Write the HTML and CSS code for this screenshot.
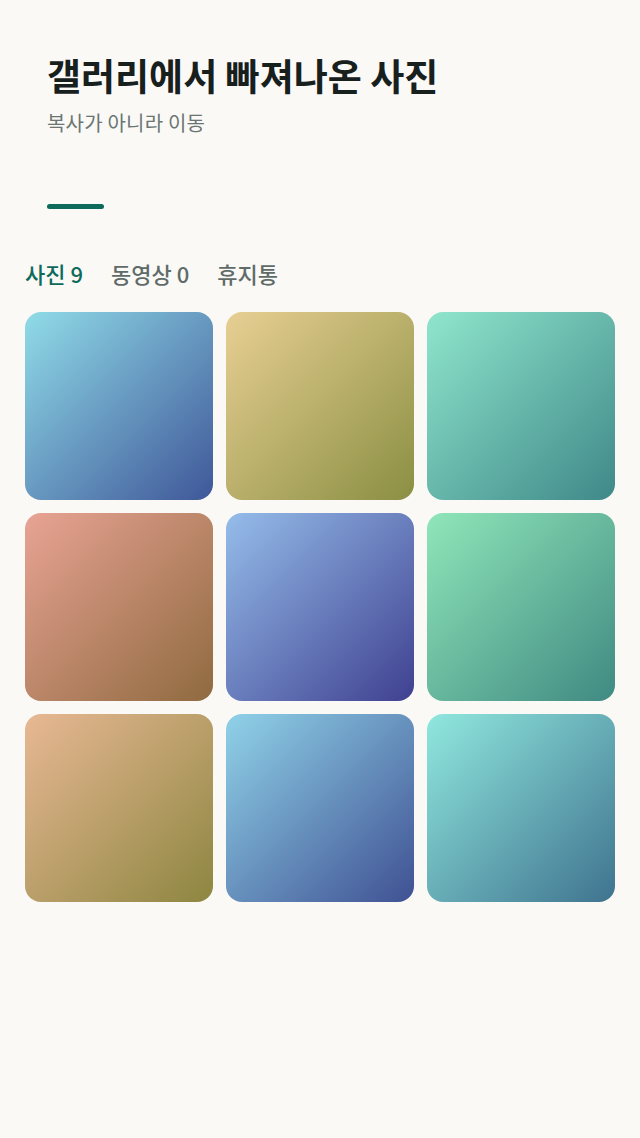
FILE: index.html
```html
<!DOCTYPE html>
<html>
    <head>
        <title>갤러리</title>
        <link rel="stylesheet" href="styles.css">
    </head>
    <body>
        <div class="header">
            <h1>갤러리에서 빠져나온 사진</h1>
            <div class="subtitle">복사가 아니라 이동</div>
            <div class="accent"></div>
        </div>
        <div class="tabs">
            <span class="tab active">사진 9</span>
            <span class="tab">동영상 0</span>
            <span class="tab">휴지통</span>
        </div>
        <div class="grid">
            <div class="tile t1"></div>
            <div class="tile t2"></div>
            <div class="tile t3"></div>
            <div class="tile t4"></div>
            <div class="tile t5"></div>
            <div class="tile t6"></div>
            <div class="tile t7"></div>
            <div class="tile t8"></div>
            <div class="tile t9"></div>
        </div>
    </body>
</html>
```

FILE: styles.css
```css
html,body{
    margin:0;
    padding:0;
    background:#faf9f6;
    font-family:"Noto Sans CJK KR","Noto Sans",sans-serif;
}
.header{
    padding:50px 47px 0 47px;
}
h1{
    margin:0;
    font-size:37px;
    line-height:50px;
    font-weight:700;
    color:#17201d;
}
.subtitle{
    margin-top:10px;
    font-size:20px;
    line-height:26px;
    letter-spacing:0.2px;
    color:#6b7572;
}
.accent{
    margin-top:68px;
    width:57px;
    height:5px;
    border-radius:3px;
    background:#0e6b5c;
}
.tabs{
    display:flex;
    gap:28px;
    padding:49px 25px 0 25px;
    height:38px;
}
.tab{
    font-size:22px;
    line-height:30px;
    font-weight:500;
    color:#5f6b68;
}
.tab.active{
    color:#0e6b5c;
}
.grid{
    display:grid;
    grid-template-columns:repeat(3,188px);
    grid-auto-rows:188px;
    gap:13px;
    padding:16px 25px 0 25px;
}
.tile{
    border-radius:16px;
}
.t1{background:linear-gradient(135deg,#90dce8,#3f5799);}
.t2{background:linear-gradient(135deg,#e8cf93,#8a8f43);}
.t3{background:linear-gradient(135deg,#8fe6cc,#3f8889);}
.t4{background:linear-gradient(135deg,#e8a394,#8f6a3f);}
.t5{background:linear-gradient(135deg,#95bdea,#3f4090);}
.t6{background:linear-gradient(135deg,#90e6b9,#3f8a82);}
.t7{background:linear-gradient(135deg,#e8b894,#8d8640);}
.t8{background:linear-gradient(135deg,#90d2e8,#3f5193);}
.t9{background:linear-gradient(135deg,#90e8de,#3f738f);}
```
